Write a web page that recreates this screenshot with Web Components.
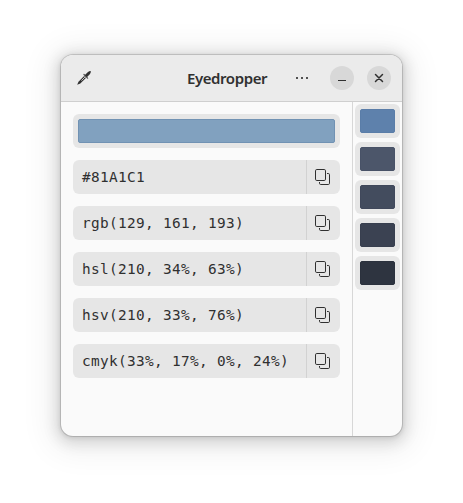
<!DOCTYPE html>
<html lang="en">
<head>
<meta charset="utf-8">
<title>Eyedropper</title>
<style>
html,body{margin:0;height:100%;background:#fff}
body{box-sizing:border-box;padding:55px 0 0 61px;overflow:hidden}
</style>
</head>
<body>
<eye-window>
  <eye-header slot="header" heading="Eyedropper"></eye-header>
  <colour-swatch fill="#81a1bf" edge="#7192b3"></colour-swatch>
  <format-row>#81A1C1</format-row>
  <format-row>rgb(129, 161, 193)</format-row>
  <format-row>hsl(210, 34%, 63%)</format-row>
  <format-row>hsv(210, 33%, 76%)</format-row>
  <format-row>cmyk(33%, 17%, 0%, 24%)</format-row>
  <colour-swatch slot="history" fill="#5e81ac" edge="#5a7da8"></colour-swatch>
  <colour-swatch slot="history" fill="#4c566a" edge="#485267"></colour-swatch>
  <colour-swatch slot="history" fill="#434c5e" edge="#40485b"></colour-swatch>
  <colour-swatch slot="history" fill="#3b4252" edge="#383f4f"></colour-swatch>
  <colour-swatch slot="history" fill="#2e3440" edge="#2b313d"></colour-swatch>
</eye-window>
<script>
class EyeWindow extends HTMLElement {
  constructor() {
    super();
    this.attachShadow({mode: 'open'}).innerHTML = `
    <style>
      :host{display:flex;flex-direction:column;width:341px;height:381px;border-radius:12px;overflow:hidden;background:#fafafa;color:#303030;
        box-shadow:0 0 0 1px rgba(0,0,0,.13),0 1px 4px 1px rgba(0,0,0,.10),0 3px 14px 5px rgba(0,0,0,.12),0 4px 30px 14px rgba(0,0,0,.055)}
      .body{display:flex;flex:1}
      main{flex:1;display:flex;flex-direction:column;gap:12px;padding:12px}
      aside{width:45px;padding:2px;border-left:1px solid #d7d7d7;display:flex;flex-direction:column;gap:4px}
    </style>
    <slot name="header"></slot>
    <div class="body"><main><slot></slot></main><aside><slot name="history"></slot></aside></div>`;
  }
}
class EyeHeader extends HTMLElement {
  constructor() {
    super();
    this.attachShadow({mode: 'open'}).innerHTML = `
    <style>
      :host{display:grid;grid-template-columns:126px 80px 1fr;align-items:center;height:46px;border-bottom:1px solid #cfcfcf;background:#ebebeb}
      .pick{display:block;margin-left:15px}
      h1{margin:0;font:600 15px/20px "Noto Sans","Open Sans",sans-serif;letter-spacing:-.42px;white-space:nowrap;color:#303030}
      .controls{display:flex;align-items:center;padding-left:23px}
      .menu{width:24px;height:24px}
      .round{display:grid;place-items:center;width:24px;height:24px;border-radius:50%;background:#d8d8d8;margin-left:16px}
      .round + .round{margin-left:13px}
      svg{display:block}
    </style>
    <svg class="pick" width="16" height="16" viewBox="0 0 16 16">
      <path d="M1.2 14.8 L2.5 11.7 L8.1 6.1 L9.9 7.9 L4.3 13.5Z" fill="#303030"/>
      <path d="M5.4 10.6 L8.9 7.1" stroke="#c9c9c9" stroke-width="1"/>
      <path d="M8 4.5 L11.6 8.1" stroke="#303030" stroke-opacity=".8" stroke-width="1.3" stroke-linecap="round"/>
      <path d="M8.7 5.2 L11.7 2.2 Q13.2 .9 14.8 1 Q15 2.8 13.8 4.3 L10.8 7.3Z" fill="#303030"/>
    </svg>
    <h1></h1>
    <div class="controls">
      <svg class="menu" viewBox="0 0 24 24" shape-rendering="crispEdges" fill="#505050"><path d="M6 11h2v2h-2zM11 11h2v2h-2zM16 11h2v2h-2z"/></svg>
      <span class="round"><svg width="24" height="24"><path d="M8 14h8v1h-8z" fill="#303030"/></svg></span>
      <span class="round"><svg width="24" height="24"><path d="M8.5 8.5l7 7m0-7l-7 7" stroke="#303030" stroke-width="1.5" stroke-linecap="round"/></svg></span>
    </div>`;
  }
  connectedCallback() {
    this.shadowRoot.querySelector('h1').textContent = this.getAttribute('heading');
  }
}
class ColourSwatch extends HTMLElement {
  constructor() {
    super();
    this.attachShadow({mode: 'open'}).innerHTML = `
    <style>
      :host{display:block;box-sizing:border-box;height:34px;padding:5px;border-radius:6px;background:#e6e6e6}
      div{box-sizing:border-box;height:24px;border:1px solid;border-radius:2px}
    </style><div></div>`;
  }
  connectedCallback() {
    const d = this.shadowRoot.querySelector('div');
    d.style.background = this.getAttribute('fill');
    d.style.borderColor = this.getAttribute('edge');
  }
}
class FormatRow extends HTMLElement {
  constructor() {
    super();
    this.attachShadow({mode: 'open'}).innerHTML = `
    <style>
      :host{display:flex;height:34px;border-radius:6px;background:#e6e6e6;overflow:hidden;color:#303030;font:14.4px/34px "DejaVu Sans Mono",monospace;letter-spacing:.34px}
      .text{flex:1;padding-left:9px;white-space:nowrap}
      .copy{display:grid;place-items:center;width:33px;border-left:1px solid #d2d2d2}
      svg{display:block}
    </style>
    <div class="text"><slot></slot></div>
    <div class="copy"><svg width="17" height="16" viewBox="0 0 17 16" fill="none" stroke="#303030">
      <rect x=".5" y=".5" width="10" height="11" rx="1.3"/>
      <path d="M12 4.5h1.3q1.2 0 1.2 1.2v8.6q0 1.2-1.2 1.2h-7.6q-1.2 0-1.2-1.2v-1.3"/>
    </svg></div>`;
  }
}
customElements.define('eye-window', EyeWindow);
customElements.define('eye-header', EyeHeader);
customElements.define('colour-swatch', ColourSwatch);
customElements.define('format-row', FormatRow);
</script>
</body>
</html>
